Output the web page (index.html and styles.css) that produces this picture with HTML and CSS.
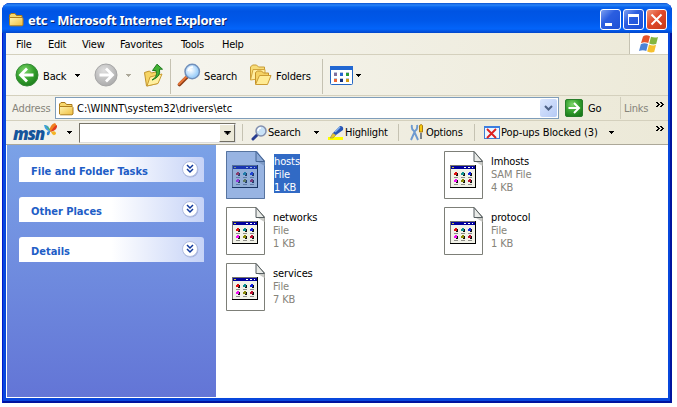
FILE: index.html
```html
<!DOCTYPE html>
<html lang="en">
<head>
<meta charset="utf-8">
<title>etc - Microsoft Internet Explorer</title>
<link rel="stylesheet" href="styles.css">
</head>
<body>
<svg class="defs" width="0" height="0">
  <defs>
    <linearGradient id="folderFill" x2="1" y2="1"><stop stop-color="#fff4b0"/><stop offset="1" stop-color="#efbd3e"/></linearGradient>
    <radialGradient id="greenBall" cx=".4" cy=".3" r=".75"><stop stop-color="#7ed66b"/><stop offset=".55" stop-color="#35a02e"/><stop offset="1" stop-color="#1b7a1c"/></radialGradient>
    <radialGradient id="grayBall" cx=".4" cy=".3" r=".75"><stop stop-color="#dedede"/><stop offset="1" stop-color="#a9a9a9"/></radialGradient>
    <radialGradient id="lens" cx=".4" cy=".4"><stop stop-color="#fff"/><stop offset="1" stop-color="#9fd0fa"/></radialGradient>
    <symbol id="folder" viewBox="0 0 16 15">
      <path d="M1.5 12V3l1.500-1.500h4l1.500 2h5.500v3" fill="#f7d76c" stroke="#a9781a"/>
      <path d="M1.500 13V5.500h12.500l1 1V13l-1 .8H2.500z" fill="url(#folderFill)" stroke="#b07f1c"/>
    </symbol>
    <symbol id="caret" viewBox="0 0 5 3"><path d="M0 0h5v1h-1v1h-1v1h-1v-1h-1v-1h-1z" fill="currentColor"/></symbol>
    <symbol id="more" viewBox="0 0 8 5"><path d="M0 0h2v1h1v1h1v1h-1v1h-1v1h-2v-1h1v-1h1v-1h-1v-1h-1zM4 0h2v1h1v1h1v1h-1v1h-1v1h-2v-1h1v-1h1v-1h-1v-1h-1z"/></symbol>
    <symbol id="chevrons" viewBox="0 0 18 18">
      <circle cx="9.500" cy="9.800" r="7.800" fill="#7f90c6" opacity=".55"/>
      <circle cx="9" cy="9" r="7.500" fill="#fff" stroke="#b3bfe0"/>
      <path d="M6 5l3 3 3-3M6 9l3 3 3-3" fill="none" stroke="#123a9c" stroke-width="1.500"/>
    </symbol>
    <symbol id="doc" viewBox="0 0 39 48">
      <path d="M.5.5h29.500l8.500 9.500v37.500h-38z" fill="#fff" stroke="#7d7f78"/>
      <path d="M30.500 10h8v5z" fill="#c9cac6"/>
      <path d="M30 .5v10h8.500z" fill="#e9ebe8" stroke="#555d60"/>
      <path d="M6 14h26v23h-26z" fill="#000"/><path d="M6 14h25v22h-25z" fill="#77776f"/>
      <path d="M7 15h24v21h-24z" fill="#f2f2e8"/><path d="M7 15h24v3h-24z" fill="#00009c"/>
      <path d="M8 16h2v1h-2z" fill="#c9c43a"/><path d="M20 16h2v1h-2zM24 16h2v1h-2zM28 16h1v1h-1z" fill="#fff"/>
      <g fill="#111"><path d="M12 22h2v3h-2zM19 22h2v3h-2zM26 22h2v3h-2zM12 29h2v3h-2zM19 29h2v3h-2zM26 29h2v3h-2z"/></g>
      <path d="M11 21h2v3h-3v-2h1z" fill="#e01010"/><path d="M18 21h2v3h-3v-2h1z" fill="#109090"/><path d="M25 21h2v3h-3v-2h1z" fill="#1020e0"/>
      <path d="M11 28h2v3h-3v-2h1z" fill="#f010f0"/><path d="M18 28h2v3h-3v-2h1z" fill="#8a8a08"/><path d="M25 28h2v3h-3v-2h1z" fill="#c01030"/>
      <path d="M10 26.500h4M17 26.500h4M24 26.500h4M10 33.500h4M17 33.500h4M24 33.500h4" stroke="#8d8d88"/>
    </symbol>
    <symbol id="magnifier" viewBox="0 0 24 24">
      <path d="M10 14L2.500 21.500" stroke="#8f3e16" stroke-width="3.600" stroke-linecap="round"/>
      <path d="M9.500 13.500L2 21" stroke="#e9793a" stroke-width="2" stroke-linecap="round"/>
      <circle cx="15.200" cy="8.500" r="7.200" fill="url(#lens)" stroke="#7190bb" stroke-width="1.500"/>
      <path d="M11 8q1-4 5-4" stroke="#fff" stroke-width="1.500" fill="none"/>
    </symbol>
  </defs>
</svg>

<div class="window">
  <header class="titlebar">
    <svg class="title-icon" width="16" height="15"><use href="#folder"/></svg>
    <h1>etc - Microsoft Internet Explorer</h1>
    <div class="controls">
      <span class="ctl"><svg width="19" height="19"><path d="M4 13h7v3H4z" fill="#fff"/></svg></span>
      <span class="ctl"><svg width="19" height="19"><path d="M4 4h11v11H4zM5 7v7h9V7z" fill="#fff" fill-rule="evenodd"/></svg></span>
      <span class="ctl close"><svg width="19" height="19"><path d="M4.500 4.500l10 10M14.500 4.500l-10 10" stroke="#fff" stroke-width="2"/></svg></span>
    </div>
  </header>

  <div class="client">
    <nav class="menubar">
      <span>File</span><span>Edit</span><span>View</span><span>Favorites</span><span>Tools</span><span>Help</span>
      <div class="flag"><svg width="20" height="18" viewBox="0 0 20 18">
        <path d="M4 1.500q3-2.300 7-.3L9.300 8q-4-1.800-7.300.2z" fill="#e5532b"/>
        <path d="M12 1.700q3.500 1.500 7 .3L17.200 9q-3.500 1-7-.6z" fill="#84b53f"/>
        <path d="M1.800 9.200q3.500-2 7.200-.2L7.300 16Q4 14.300 0 16z" fill="#4c83d7"/>
        <path d="M10 9.500q3.500 1.500 7 .5l-1.800 7q-3.500 1-7-.6z" fill="#f6c02e"/></svg></div>
    </nav>

    <div class="toolbar">
      <svg width="24" height="24"><circle cx="12" cy="12" r="11" fill="url(#greenBall)" stroke="#358b35"/><path d="M12 5.500L5.500 12l6.500 6.500M6 12h12.500" stroke="#fff" stroke-width="2.800" fill="none"/></svg>
      <span>Back</span>
      <svg class="caret" width="5" height="3"><use href="#caret"/></svg>
      <svg width="24" height="24"><circle cx="12" cy="12" r="11" fill="url(#grayBall)" stroke="#a6a6a6"/><path d="M12 5.500l6.500 6.500-6.500 6.500M18 12H5.500" stroke="#fff" stroke-width="2.800" fill="none"/></svg>
      <svg class="caret dim" width="5" height="3"><use href="#caret"/></svg>
      <svg width="21" height="24" viewBox="0 0 21 24"><path d="M1.500 9.500l5-1.500 2 2 6-1.500v12l-11 2.500z" fill="#f6d565" stroke="#c0932c"/><path d="M4 23l3-9 12-3-4 9.500z" fill="#fff0a0" stroke="#c99b32"/><path d="M9 17q6-3 4-9.500H9.500L14 1.200l5.500 5h-3Q18 14 9 17z" fill="#43b233" stroke="#1f7a1d"/></svg>
      <i class="sep"></i>
      <svg width="24" height="24"><use href="#magnifier"/></svg>
      <span>Search</span>
      <svg width="24" height="24" viewBox="0 0 24 24"><path d="M1.500 17V4l2-2h4l2 2h6v5" fill="#f7dc78" stroke="#c99c35"/><path d="M1.500 17L4 6.500h12V15z" fill="#ffeda0" stroke="#d2a53c"/><path d="M6.500 21V9.500l2-1.500h4l2 2h5v4" fill="#f5d264" stroke="#c4922a"/><path d="M6.500 21.500l4-9h11.500l-3.500 9z" fill="#ffeb94" stroke="#cc9c33"/></svg>
      <span>Folders</span>
      <i class="sep"></i>
      <svg width="23" height="19"><rect x=".5" y=".5" width="22" height="18" rx="1" fill="#fff" stroke="#2467c4"/><path d="M0 0h23v4H0z" fill="#2167d2"/><path d="M4 6.500h3M10 6.500h3M16 6.500h3M4 12.500h3M10 12.500h3M16 12.500h3" stroke="#b9c3dc"/><path d="M4 7h3v3H4z" fill="#80709e"/><path d="M10 7h3v3h-3z" fill="#2766d0"/><path d="M16 7h3v3h-3z" fill="#2a9d38"/><path d="M4 13h3v3H4z" fill="#ee6634"/><path d="M10 13h3v3h-3z" fill="#15317c"/><path d="M16 13h3v3h-3z" fill="#d59b11"/></svg>
      <svg class="caret" width="5" height="3"><use href="#caret"/></svg>
    </div>

    <div class="addressbar">
      <span class="muted">Address</span>
      <div class="address-field"><svg width="16" height="15"><use href="#folder"/></svg><span>C:\WINNT\system32\drivers\etc</span>
        <b class="drop"><svg width="9" height="6"><path d="M1 1l3.500 3.500L8 1" fill="none" stroke="#4d6185" stroke-width="2"/></svg></b></div>
      <svg class="go" width="18" height="18"><rect x=".5" y=".5" width="17" height="17" rx="1.500" fill="url(#greenBall)" stroke="#287e2b"/><path d="M3.500 9H14M9 4l5 5-5 5" fill="none" stroke="#fff" stroke-width="2"/></svg>
      <span class="go-text">Go</span>
      <div class="links"><span class="muted">Links</span><svg class="more" width="8" height="5"><use href="#more"/></svg></div>
    </div>

    <div class="msnbar">
      <div class="msn"><span>msn</span><svg width="15" height="15" viewBox="0 0 15 15"><path d="M7 8Q2 8 1 2q5-1 6 6z" fill="#3d9fe0"/><path d="M2 2l5 4 1 3z" fill="#56b848"/><path d="M7 9Q6 2 12 0q4 4-5 9z" fill="#f08020"/><path d="M7.500 9Q11 3 14 2q1 5-6.500 7z" fill="#e03a20"/><path d="M7 8q-4 0-3 4 3 1 3-4z" fill="#2d7fd0"/><path d="M8 9q5-2 5 2-3 3-5-2z" fill="#f4b424"/></svg></div>
      <svg class="caret" width="5" height="3"><use href="#caret"/></svg>
      <div class="combo"><b><svg class="caret" width="7" height="4"><use href="#caret"/></svg></b></div>
      <i class="sep"></i>
      <svg width="16" height="16" viewBox="0 0 16 16"><path d="M7 9l-5 5" stroke="#283d91" stroke-width="3" stroke-linecap="round"/><circle cx="10" cy="6" r="5" fill="#c9e2f7" stroke="#8490ae" stroke-width="1.500"/><path d="M7 6q0-3 3-3" fill="none" stroke="#fff" stroke-width="1.500"/></svg>
      <span>Search</span>
      <svg class="caret" width="5" height="3"><use href="#caret"/></svg>
      <svg width="16" height="16"><path d="M0 12h15v3H0z" fill="#ff0"/><path d="M2 13l3-5 3 2-3 3z" fill="#e8c62c" stroke="#8d8756" stroke-width=".6"/><path d="M5 8l7-7q4 0 3 4l-7 5z" fill="#2857b8"/><path d="M7 7l5-5" stroke="#86b2ee" stroke-width="1.500"/></svg>
      <span>Highlight</span>
      <i class="sep"></i>
      <svg width="14" height="17"><path d="M2 1q-1 4 2 6l4 9M7 1q1 4-2 6l-4 9" fill="none" stroke="#6d9ad0" stroke-width="1.900"/><path d="M9.500 1.500q2-2 3 0V8h-3z" fill="#f6c80f" stroke="#a87914"/><path d="M11 9v6" stroke="#55616e" stroke-width="1.500"/></svg>
      <span>Options</span>
      <i class="sep"></i>
      <svg width="16" height="15"><rect x=".5" y="1.500" width="15" height="12" fill="#eef7ff" stroke="#3d7ed4"/><path d="M0 1h16v2H0z" fill="#3d7ee0"/><path d="M3 4l9 9M12 4l-9 9" stroke="#dc2020" stroke-width="1.900"/></svg>
      <span class="popups">Pop-ups Blocked (3)</span>
      <svg class="caret" width="5" height="3"><use href="#caret"/></svg>
      <svg class="more" width="8" height="5"><use href="#more"/></svg>
    </div>

    <main class="body">
      <aside class="tasks">
        <section><h2>File and Folder Tasks</h2><svg width="18" height="18"><use href="#chevrons"/></svg></section>
        <section><h2>Other Places</h2><svg width="18" height="18"><use href="#chevrons"/></svg></section>
        <section><h2>Details</h2><svg width="18" height="18"><use href="#chevrons"/></svg></section>
      </aside>
      <div class="files">
        <div class="file selected"><div class="thumb"><svg width="39" height="48"><use href="#doc"/></svg></div><p><span>hosts</span><small>File</small><small>1 KB</small></p></div>
        <div class="file"><div class="thumb"><svg width="39" height="48"><use href="#doc"/></svg></div><p><span>lmhosts</span><small>SAM File</small><small>4 KB</small></p></div>
        <div class="file"><div class="thumb"><svg width="39" height="48"><use href="#doc"/></svg></div><p><span>networks</span><small>File</small><small>1 KB</small></p></div>
        <div class="file"><div class="thumb"><svg width="39" height="48"><use href="#doc"/></svg></div><p><span>protocol</span><small>File</small><small>1 KB</small></p></div>
        <div class="file"><div class="thumb"><svg width="39" height="48"><use href="#doc"/></svg></div><p><span>services</span><small>File</small><small>7 KB</small></p></div>
      </div>
    </main>
  </div>
</div>
</body>
</html>
```

FILE: styles.css
```css
* { box-sizing: border-box; }
body {
  margin: 0;
  padding: 3px 0 0 2px;
  background: #fff;
  font: 11px/13px "DejaVu Sans Condensed", "DejaVu Sans", sans-serif;
  font-stretch: condensed;
  letter-spacing: -0.23px;
  color: #000;
  overflow: hidden;
}
.defs { position: absolute; }
svg { display: block; flex: none; }
span, h1, h2 { white-space: nowrap; }

.window {
  width: 670px;
  height: 400px;
  display: flex;
  flex-direction: column;
  padding: 0 4px 5px;
  border-radius: 8px 8px 0 0;
  background: #0847dc;
  box-shadow: inset 1px 0 #0019cf, inset -2px -2px #00139e;
}
.titlebar {
  height: 30px;
  flex: none;
  display: flex;
  align-items: center;
  margin: 0 -4px;
  padding: 2px 5px 0 6px;
  border-radius: 8px 8px 0 0;
  background: linear-gradient(#0a52d0 0, #2a85f8 2px, #0865ee 4px, #0054e3 8px, #0058ea 18px, #0364fa 26px, #0146cb 30px);
}
h1 {
  margin: 2px 0 0 4px;
  font: bold 13px/16px "Noto Sans", sans-serif;
  font-stretch: normal;
  letter-spacing: -0.3px;
  color: #fff;
  text-shadow: 1px 1px #0a246a;
}
.controls { display: flex; gap: 2px; margin-left: auto; }
.ctl {
  width: 21px;
  height: 21px;
  border: 1px solid #fff;
  border-radius: 3px;
  background: linear-gradient(135deg, #7d9ff0, #2b5ee0 40%, #1c50d6);
}
.ctl.close { background: linear-gradient(135deg, #f0987c, #e0492a 45%, #c63a18); }

.client { flex: 1; min-height: 0; display: flex; flex-direction: column; background: #ece9d8; }
.menubar {
  display: grid;
  grid-template-columns: 32px 34px 38px 61px 41px 1fr 39px;
  align-items: center;
  height: 22px;
  flex: none;
  padding-left: 10px;
  background: linear-gradient(90deg, #f8f8f4, #ece9d8);
  border-bottom: 1px solid #d4d0bd;
}
.menubar > span, .toolbar > span { padding-top: 2px; }
.flag {
  height: 21px;
  display: flex;
  align-items: center;
  justify-content: center;
  background: #fff;
  border-left: 1px solid #c5c2b2;
}
.caret { color: #000; }
.toolbar .dim { color: #aca899; }
.sep { width: 1px; background: #c5c2b2; align-self: stretch; }
.toolbar {
  display: grid;
  grid-template-columns: 28px 32px 19px 32px 17px 27px 7px 27px 45px 27px 46px 8px 26px 1fr;
  align-items: center;
  height: 41px;
  flex: none;
  padding-left: 9px;
  background: linear-gradient(90deg, #f8f8f4, #edead9);
  border-bottom: 1px solid #d4d0bd;
}
.toolbar > span { letter-spacing: -.15px; }
.toolbar .sep { margin: 4px 0 1px; }
.addressbar {
  display: flex;
  align-items: center;
  height: 24px;
  flex: none;
  padding-left: 6px;
  background: linear-gradient(90deg, #f4f3ec, #ece9d8);
}
.muted { color: #86847a; }
.addressbar > .muted { width: 43px; letter-spacing: -.1px; }
.address-field {
  width: 504px;
  height: 22px;
  display: flex;
  align-items: center;
  gap: 3px;
  padding-left: 2px;
  background: #fff;
  border: 1px solid #7f9db9;
}
.address-field span { padding-top: 1px; letter-spacing: 0; }
.drop {
  width: 17px;
  height: 18px;
  display: flex;
  align-items: center;
  justify-content: center;
  margin: 0 1px 0 auto;
  border-radius: 2px;
  background: linear-gradient(135deg, #dce7fe, #b5caf5);
}
.go { margin-left: 6px; }
.go-text { width: 32px; margin-left: 5px; }
.links { width: 47px; height: 22px; display: flex; align-items: center; padding: 0 3px; border-left: 1px solid #d0cdbb; }
.links .more { margin: -8px 0 0 auto; }
.msnbar {
  display: grid;
  grid-template-columns: 54px 12px 163px 9px 17px 46px 14px 17px 53px 12px 16px 48px 10px 17px 108px 47px 1fr;
  align-items: center;
  height: 25px;
  flex: none;
  padding-left: 7px;
  border-top: 1px solid #d4d0bd;
  border-bottom: 1px solid #aca899;
  background: linear-gradient(90deg, #f4f3ec, #ece9d8);
}
.msnbar .sep { height: 17px; align-self: center; }
.msnbar > .more { margin-top: -9px; }
.msnbar > .popups { letter-spacing: -.08px; }
.msn { display: flex; align-items: center; padding-top: 2px; }
.msn span {
  font: italic 900 17px/18px "Open Sans", sans-serif;
  letter-spacing: -1.3px;
  color: #15559b;
}
.msn svg { margin: -7px 0 0 -1px; }
.combo {
  width: 157px;
  height: 20px;
  display: flex;
  justify-content: flex-end;
  background: #fff;
  border: 1px solid #777469;
  border-right-color: #ddd;
  border-bottom-color: #ddd;
}
.combo b {
  width: 16px;
  display: flex;
  align-items: center;
  justify-content: center;
  background: #ece9d8;
  border: 1px solid #fff;
  border-right-color: #716f64;
  border-bottom-color: #716f64;
}

.body { flex: 1; min-height: 0; display: flex; background: #fff; padding: 0 0 1px 1px; }
.tasks {
  width: 209px;
  padding: 12px;
  display: flex;
  flex-direction: column;
  gap: 15px;
  background: linear-gradient(#7ba2e7, #6375d6);
}
.tasks section {
  height: 25px;
  display: flex;
  align-items: center;
  justify-content: space-between;
  padding: 0 5px 0 12px;
  border-radius: 3px 3px 0 0;
  background: linear-gradient(90deg, #fff 50%, #c6d3f7);
}
h2 { margin: 3px 0 0; font: inherit; font-weight: bold; letter-spacing: 0; color: #215dc6; }
.tasks svg { margin-top: -2px; }
.files {
  display: grid;
  grid-template-columns: 218px 218px;
  grid-auto-rows: 56px;
  align-content: start;
  padding: 6px 0 0 10px;
}
.file { display: flex; align-items: flex-start; }
.thumb { width: 39px; height: 48px; }
.file p { margin: 4px 0 0 8px; display: flex; flex-direction: column; letter-spacing: -.12px; }
.file span, .file small { font-size: 11px; line-height: 13px; }
.file small { color: #86847a; }
.selected p { height: 38px; margin-left: 9px; background: #316ac5; box-shadow: 0 -1px #316ac5; }
.selected p span, .selected p small { color: #fff; }
.selected .thumb { position: relative; }
.selected .thumb::after {
  content: "";
  position: absolute;
  inset: 0;
  background: #316ac5;
  opacity: .5;
  clip-path: polygon(0 0, 31px 0, 100% 10px, 100% 100%, 0 100%);
}
```
